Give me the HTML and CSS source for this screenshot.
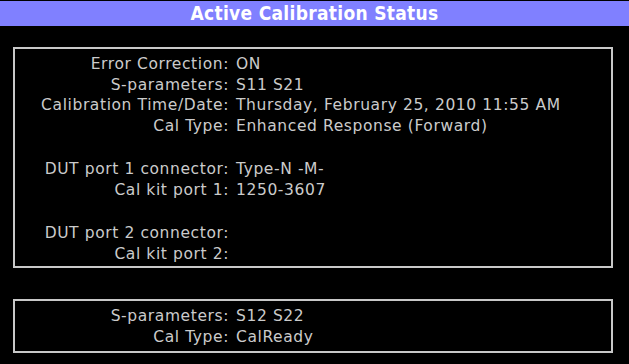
FILE: index.html
```html
<!DOCTYPE html>
<html>
<head>
	<meta charset="utf-8">
	<title>Active Calibration Status</title>
	<link rel="stylesheet" href="styles.css">
</head>
<body>

	<div class="title">Active Calibration Status</div>

	<div class="panel main">
		<div class="row"><span class="key">Error Correction:</span><span class="val">ON</span></div>
		<div class="row"><span class="key">S-parameters:</span><span class="val">S11 S21</span></div>
		<div class="row"><span class="key">Calibration Time/Date:</span><span class="val">Thursday, February 25, 2010 11:55 AM</span></div>
		<div class="row"><span class="key">Cal Type:</span><span class="val">Enhanced Response (Forward)</span></div>
		<div class="spacer"></div>
		<div class="row"><span class="key">DUT port 1 connector:</span><span class="val">Type-N -M-</span></div>
		<div class="row"><span class="key">Cal kit port 1:</span><span class="val">1250-3607</span></div>
		<div class="spacer"></div>
		<div class="row"><span class="key">DUT port 2 connector:</span><span class="val"></span></div>
		<div class="row"><span class="key">Cal kit port 2:</span><span class="val"></span></div>
	</div>

	<div class="panel second">
		<div class="row"><span class="key">S-parameters:</span><span class="val">S12 S22</span></div>
		<div class="row"><span class="key">Cal Type:</span><span class="val">CalReady</span></div>
	</div>

</body>
</html>
```

FILE: styles.css
```css
body, html {
	height: 100%;
	min-height: 100%;
}

body {
	margin: 0;
	padding: 1px 0 0 0;
	background: #000;
	color: #cbcbcb;
	font-family: "DejaVu Sans", sans-serif;
	font-size: 15.5px;
	letter-spacing: 0.6px;
}

.title {
	height: 25px;
	line-height: 25px;
	background: #8080ff;
	color: #fff;
	text-align: center;
	font-family: "DejaVu Sans Condensed", "DejaVu Sans", sans-serif;
	font-weight: bold;
	font-size: 19px;
	letter-spacing: 0.3px;
}

.panel {
	box-sizing: border-box;
	width: 600px;
	margin-left: 13px;
	border: 2px solid #c8c8c8;
}

.panel.main {
	margin-top: 21px;
	height: 221px;
	padding-top: 5px;
}

.panel.second {
	margin-top: 31px;
	height: 54px;
	padding-top: 5px;
}

.row {
	display: grid;
	grid-template-columns: 214px 1fr;
	column-gap: 7px;
	line-height: 20.5px;
	white-space: nowrap;
}

.key {
	text-align: right;
}

.spacer {
	height: 23px;
}
```
